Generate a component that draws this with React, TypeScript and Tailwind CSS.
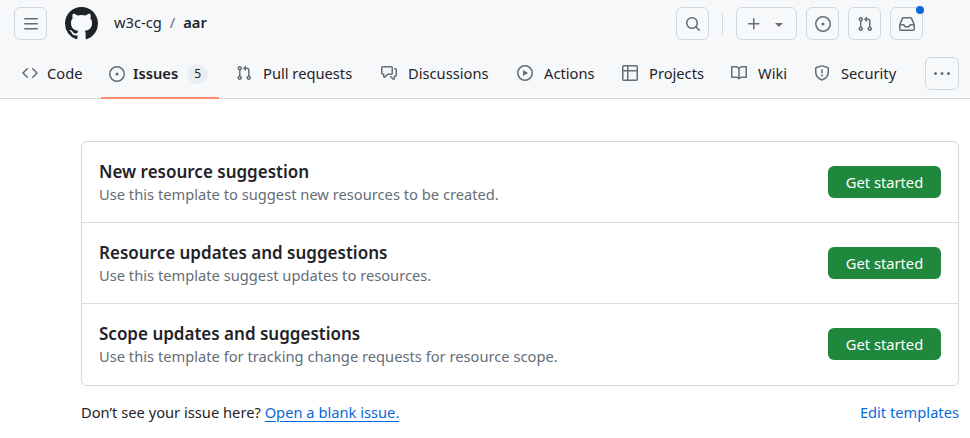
import type { ReactNode } from "react"

const paths = {
    bars: "M1 2.75A.75.75 0 0 1 1.75 2h12.5a.75.75 0 0 1 0 1.5H1.75A.75.75 0 0 1 1 2.75Zm0 5A.75.75 0 0 1 1.75 7h12.5a.75.75 0 0 1 0 1.5H1.75A.75.75 0 0 1 1 7.75ZM1.75 12h12.5a.75.75 0 0 1 0 1.5H1.75a.75.75 0 0 1 0-1.5Z",
    github: "M8 0c4.42 0 8 3.58 8 8a8.013 8.013 0 0 1-5.45 7.59c-.4.08-.55-.17-.55-.38 0-.27.01-1.13.01-2.2 0-.75-.25-1.23-.54-1.48 1.78-.2 3.65-.88 3.65-3.95 0-.88-.31-1.59-.82-2.15.08-.2.36-1.02-.08-2.12 0 0-.67-.22-2.2.82-.64-.18-1.32-.27-2-.27-.68 0-1.36.09-2 .27-1.53-1.03-2.2-.82-2.2-.82-.44 1.1-.16 1.92-.08 2.12-.51.56-.82 1.28-.82 2.15 0 3.06 1.86 3.75 3.64 3.95-.23.2-.44.55-.51 1.07-.46.21-1.61.55-2.33-.66-.15-.24-.6-.83-1.23-.82-.67.01-.27.38.01.53.34.19.73.9.82 1.13.16.45.68 1.31 2.69.94 0 .67.01 1.3.01 1.49 0 .21-.15.45-.55.38A7.995 7.995 0 0 1 0 8c0-4.42 3.58-8 8-8Z",
    search: "M10.68 11.74a6 6 0 0 1-7.922-8.982 6 6 0 0 1 8.982 7.922l3.04 3.04a.749.749 0 0 1-.326 1.275.749.749 0 0 1-.734-.215ZM11.5 7a4.499 4.499 0 1 0-8.997 0A4.499 4.499 0 0 0 11.5 7Z",
    plus: "M7.75 2a.75.75 0 0 1 .75.75V7h4.25a.75.75 0 0 1 0 1.5H8.5v4.25a.75.75 0 0 1-1.5 0V8.5H2.75a.75.75 0 0 1 0-1.5H7V2.75A.75.75 0 0 1 7.75 2Z",
    caret: "m4.427 7.427 3.396 3.396a.25.25 0 0 0 .354 0l3.396-3.396A.25.25 0 0 0 11.396 7H4.604a.25.25 0 0 0-.177.427Z",
    issue: "M8 9.5a1.5 1.5 0 1 0 0-3 1.5 1.5 0 0 0 0 3ZM8 0a8 8 0 1 1 0 16A8 8 0 0 1 8 0ZM1.5 8a6.5 6.5 0 1 0 13 0 6.5 6.5 0 0 0-13 0Z",
    pull: "M1.5 3.25a2.25 2.25 0 1 1 3 2.122v5.256a2.251 2.251 0 1 1-1.5 0V5.372A2.25 2.25 0 0 1 1.5 3.25Zm5.677-.177L9.573.677A.25.25 0 0 1 10 .854V2.5h1A2.5 2.5 0 0 1 13.5 5v5.628a2.251 2.251 0 1 1-1.5 0V5a1 1 0 0 0-1-1h-1v1.646a.25.25 0 0 1-.427.177L7.177 3.427a.25.25 0 0 1 0-.354ZM3.75 2.5a.75.75 0 1 0 0 1.5.75.75 0 0 0 0-1.5Zm0 9.5a.75.75 0 1 0 0 1.5.75.75 0 0 0 0-1.5Zm8.25.75a.75.75 0 1 0 1.5 0 .75.75 0 0 0-1.5 0Z",
    inbox: "M2.8 2.06A1.75 1.75 0 0 1 4.41 1h7.18c.7 0 1.333.417 1.61 1.06l2.74 6.395c.04.093.06.194.06.295v4.5A1.75 1.75 0 0 1 14.25 15H1.75A1.75 1.75 0 0 1 0 13.25v-4.5c0-.101.02-.202.06-.295Zm1.61.44a.25.25 0 0 0-.23.152L1.887 8H4.75a.75.75 0 0 1 .6.3L6.625 10h2.75l1.275-1.7a.75.75 0 0 1 .6-.3h2.863L11.82 2.652a.25.25 0 0 0-.23-.152Zm10.09 7h-2.875l-1.275 1.7a.75.75 0 0 1-.6.3h-3.5a.75.75 0 0 1-.6-.3L4.375 9.5H1.5v3.75c0 .138.112.25.25.25h12.5a.25.25 0 0 0 .25-.25Z",
    code: "m11.28 3.22 4.25 4.25a.75.75 0 0 1 0 1.06l-4.25 4.25a.749.749 0 0 1-1.275-.326.749.749 0 0 1 .215-.734L13.94 8l-3.72-3.72a.749.749 0 0 1 .326-1.275.749.749 0 0 1 .734.215Zm-6.56 0a.751.751 0 0 1 1.042.018.751.751 0 0 1 .018 1.042L2.06 8l3.72 3.72a.749.749 0 0 1-.326 1.275.749.749 0 0 1-.734-.215L.47 8.53a.75.75 0 0 1 0-1.06Z",
    discussion: "M1.75 1h8.5c.966 0 1.75.784 1.75 1.75v5.5A1.75 1.75 0 0 1 10.25 10H7.061l-2.574 2.573A1.458 1.458 0 0 1 2 11.543V10h-.25A1.75 1.75 0 0 1 0 8.25v-5.5C0 1.784.784 1 1.75 1ZM1.5 2.75v5.5c0 .138.112.25.25.25h1a.75.75 0 0 1 .75.75v2.19l2.72-2.72a.749.749 0 0 1 .53-.22h3.5a.25.25 0 0 0 .25-.25v-5.5a.25.25 0 0 0-.25-.25h-8.5a.25.25 0 0 0-.25.25Zm13 2a.25.25 0 0 0-.25-.25h-.5a.75.75 0 0 1 0-1.5h.5c.966 0 1.75.784 1.75 1.75v5.5A1.75 1.75 0 0 1 14.25 12H14v1.543a1.458 1.458 0 0 1-2.487 1.03L9.22 12.28a.749.749 0 0 1 .326-1.275.749.749 0 0 1 .734.215l2.22 2.22v-2.19a.75.75 0 0 1 .75-.75h1a.25.25 0 0 0 .25-.25Z",
    play: "M8 0a8 8 0 1 1 0 16A8 8 0 0 1 8 0ZM1.5 8a6.5 6.5 0 1 0 13 0 6.5 6.5 0 0 0-13 0Zm4.879-2.773 4.264 2.559a.25.25 0 0 1 0 .428l-4.264 2.559A.25.25 0 0 1 6 10.559V5.442a.25.25 0 0 1 .379-.215Z",
    table: "M0 1.75C0 .784.784 0 1.75 0h12.5C15.216 0 16 .784 16 1.75v12.5A1.75 1.75 0 0 1 14.25 16H1.75A1.75 1.75 0 0 1 0 14.25ZM6.5 6.5v8h7.75a.25.25 0 0 0 .25-.25V6.5Zm8-1.5V1.75a.25.25 0 0 0-.25-.25H6.5V5Zm-13 1.5v7.75c0 .138.112.25.25.25H5v-8ZM5 5V1.5H1.75a.25.25 0 0 0-.25.25V5Z",
    book: "M0 1.75A.75.75 0 0 1 .75 1h4.253c1.227 0 2.317.59 3 1.501A3.743 3.743 0 0 1 11.006 1h4.245a.75.75 0 0 1 .75.75v10.5a.75.75 0 0 1-.75.75h-4.507a2.25 2.25 0 0 0-1.591.659l-.622.621a.75.75 0 0 1-1.06 0l-.622-.621A2.25 2.25 0 0 0 5.258 13H.75a.75.75 0 0 1-.75-.75Zm7.251 10.324.004-5.073-.002-2.253A2.25 2.25 0 0 0 5.003 2.5H1.5v9h3.757a3.75 3.75 0 0 1 1.994.574ZM8.755 4.75l-.004 7.322a3.752 3.752 0 0 1 1.992-.572H14.5v-9h-3.495a2.25 2.25 0 0 0-2.25 2.25Z",
    shield: "M7.467.133a1.748 1.748 0 0 1 1.066 0l5.25 1.68A1.75 1.75 0 0 1 15 3.48V7c0 1.566-.32 3.182-1.303 4.682-.983 1.498-2.585 2.813-5.032 3.855a1.697 1.697 0 0 1-1.33 0c-2.447-1.042-4.049-2.357-5.032-3.855C1.32 10.182 1 8.566 1 7V3.48a1.75 1.75 0 0 1 1.217-1.667Zm.61 1.429a.25.25 0 0 0-.153 0l-5.25 1.68a.25.25 0 0 0-.174.238V7c0 1.358.275 2.666 1.057 3.86.784 1.194 2.121 2.34 4.366 3.297a.196.196 0 0 0 .154 0c2.245-.956 3.582-2.104 4.366-3.298C13.225 9.666 13.5 8.36 13.5 7V3.48a.251.251 0 0 0-.174-.237l-5.25-1.68ZM8.75 4.75v3a.75.75 0 0 1-1.5 0v-3a.75.75 0 0 1 1.5 0ZM9 10.5a1 1 0 1 1-2 0 1 1 0 0 1 2 0Z",
    kebab: "M8 9a1.5 1.5 0 1 0 0-3 1.5 1.5 0 0 0 0 3ZM1.5 9a1.5 1.5 0 1 0 0-3 1.5 1.5 0 0 0 0 3Zm13 0a1.5 1.5 0 1 0 0-3 1.5 1.5 0 0 0 0 3Z",
}

const Icon = ({ d, className = "w-4 h-4 text-[#656d76]" }: { d: string; className?: string }) => (
    <svg viewBox="0 0 16 16" fill="currentColor" className={`shrink-0 ${className}`}>
        <path d={d} />
    </svg>
)

const IconButton = ({ children, className = "w-[33px]" }: { children: ReactNode; className?: string }) => (
    <div className={`relative flex items-center justify-center h-[33px] rounded-md border border-[#d0d7de] ${className}`}>
        {children}
    </div>
)

const tabs = [
    { label: "Pull requests", icon: paths.pull, width: "w-[145px]" },
    { label: "Discussions", icon: paths.discussion, width: "w-[136px]" },
    { label: "Actions", icon: paths.play, width: "w-[105px]" },
    { label: "Projects", icon: paths.table, width: "w-[109px]" },
    { label: "Wiki", icon: paths.book, width: "w-[83px]" },
    { label: "Security", icon: paths.shield, width: "w-[98px]" },
]

const templates = [
    { title: "New resource suggestion", about: "Use this template to suggest new resources to be created." },
    { title: "Resource updates and suggestions", about: "Use this template suggest updates to resources." },
    { title: "Scope updates and suggestions", about: "Use this template for tracking change requests for resource scope." },
]

const App = () => {
    return (
        <div className="w-[970px] h-[438px] overflow-hidden bg-white text-[14.7px] text-[#1f2328] font-['Noto_Sans',sans-serif]">
            <header className="h-[99px] bg-[#f6f8fa] border-b border-[#d0d7de]">
                <div className="flex items-start h-[46px] pt-[7px] pl-[14px] pr-[47px]">
                    <IconButton>
                        <Icon d={paths.bars} />
                    </IconButton>
                    <Icon d={paths.github} className="w-[33px] h-[33px] ml-[18px] text-[#1f2328]" />
                    <div className="flex items-center h-[33px] ml-[16px] -mt-[1px]">
                        <span>w3c-cg</span>
                        <span className="mx-[8px] text-[#656d76]">/</span>
                        <span className="font-semibold">aar</span>
                    </div>
                    <div className="flex items-center ml-auto">
                        <IconButton>
                            <Icon d={paths.search} />
                        </IconButton>
                        <div className="w-px h-5 mx-[13px] bg-[#d0d7de]" />
                        <IconButton className="w-[61px] gap-[9px]">
                            <Icon d={paths.plus} />
                            <Icon d={paths.caret} />
                        </IconButton>
                        <div className="flex gap-[9px] ml-[9px]">
                            <IconButton>
                                <Icon d={paths.issue} />
                            </IconButton>
                            <IconButton>
                                <Icon d={paths.pull} />
                            </IconButton>
                            <IconButton>
                                <Icon d={paths.inbox} />
                                <span className="absolute -top-[2px] -right-[2px] w-2 h-2 rounded-full bg-[#0969da]" />
                            </IconButton>
                        </div>
                    </div>
                </div>
                <nav className="relative flex items-center h-[52px] pl-[14px] pt-[3px]">
                    <div className="flex items-center gap-[9px] w-[87px] px-2">
                        <Icon d={paths.code} />
                        <span>Code</span>
                    </div>
                    <div className="relative flex items-center self-stretch -mt-[3px] pt-[3px] w-[118px] pl-2">
                        <Icon d={paths.issue} />
                        <span className="ml-2 font-semibold">Issues</span>
                        <span className="ml-[9px] flex items-center justify-center w-[21px] h-5 rounded-full bg-[#eaeef2] text-[12px]">5</span>
                        <div className="absolute left-0 right-0 -bottom-px h-[2px] bg-[#fd8c73]" />
                    </div>
                    <div className="flex items-center ml-[9px]">
                        {tabs.map(tab => (
                            <div key={tab.label} className={`flex items-center gap-[11px] px-2 ${tab.width}`}>
                                <Icon d={tab.icon} />
                                <span>{tab.label}</span>
                            </div>
                        ))}
                    </div>
                    <div className="absolute right-[11px] top-[11px]">
                        <IconButton className="w-[34px]">
                            <Icon d={paths.kebab} />
                        </IconButton>
                    </div>
                </nav>
            </header>
            <main className="pt-[42px] pl-[81px] pr-[11px]">
                <div className="rounded-md border border-[#d0d7de]">
                    {templates.map((t, i) => (
                        <div
                            key={t.title}
                            className={`flex items-start justify-between pt-[18px] px-[17px] ${i > 0 ? "border-t border-[#d8dee4]" : ""} ${i === 2 ? "h-[82px]" : i === 1 ? "h-[81px]" : "h-[80px]"}`}
                        >
                            <div>
                                <div className="text-[17px] leading-6 font-semibold">{t.title}</div>
                                <div className="leading-[21px] text-[#656d76]">{t.about}</div>
                            </div>
                            <button className="w-[113px] h-8 mt-[6px] rounded-md bg-[#1f883d] text-white">Get started</button>
                        </div>
                    ))}
                </div>
                <div className="flex justify-between mt-4 leading-[21px]">
                    <div>
                        Don’t see your issue here? <a className="text-[#0969da] underline underline-offset-[3px]">Open a blank issue.</a>
                    </div>
                    <a className="text-[#0969da]">Edit templates</a>
                </div>
            </main>
        </div>
    )
}

export default App
